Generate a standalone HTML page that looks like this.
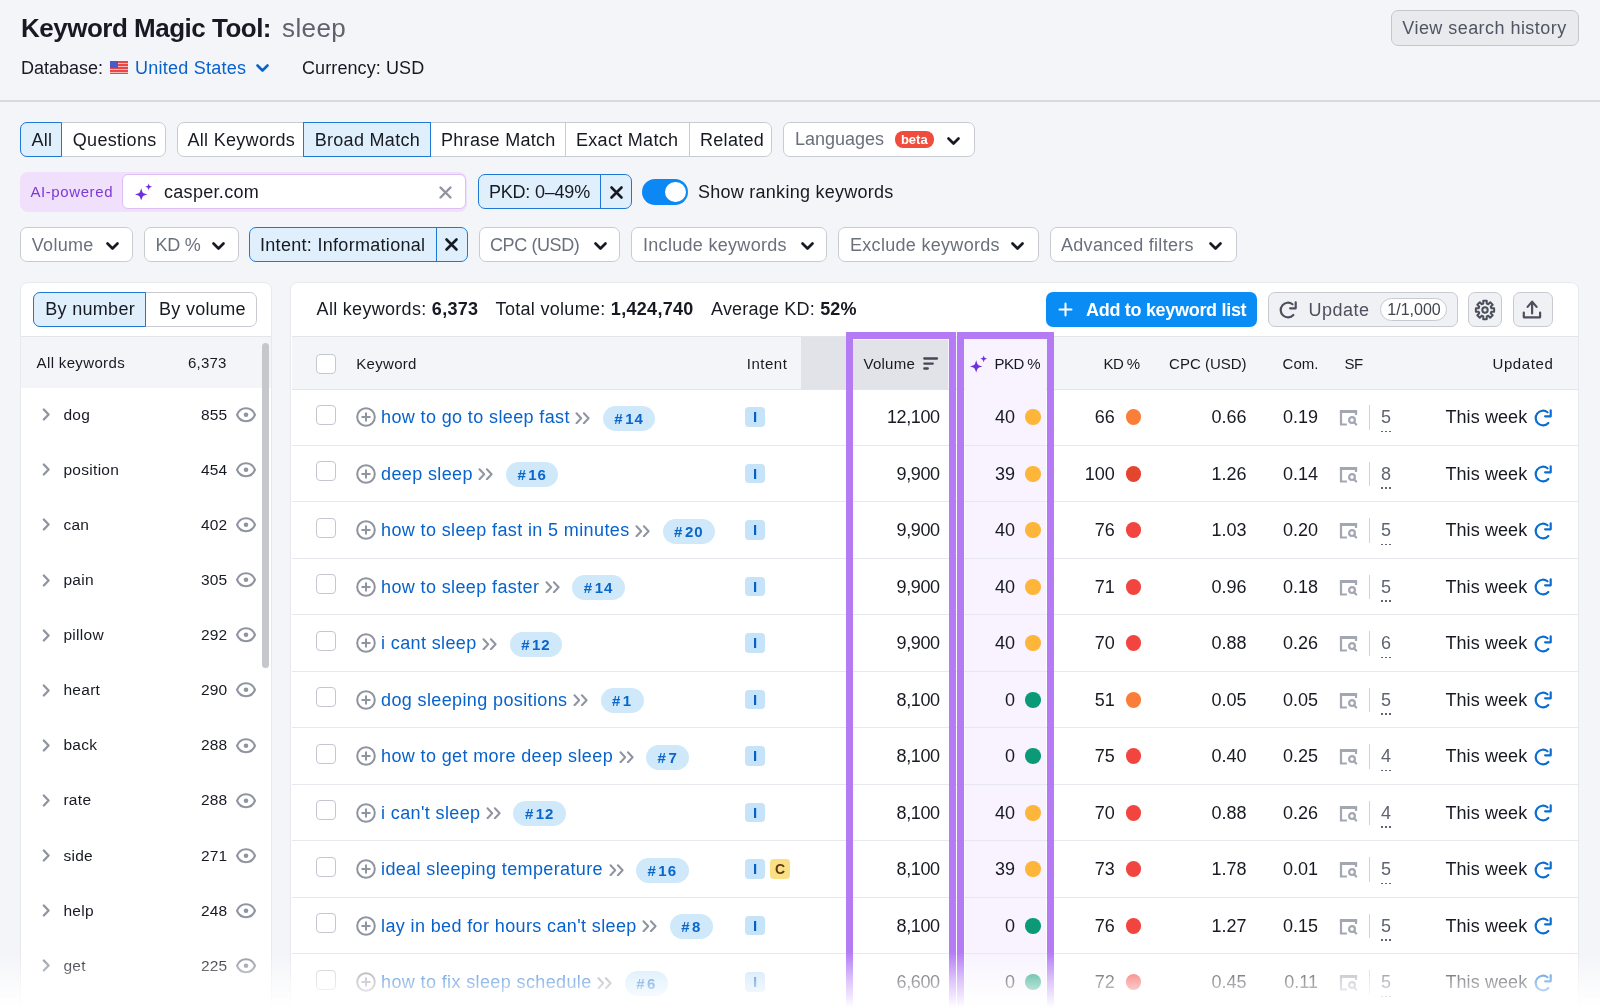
<!DOCTYPE html><html><head><meta charset="utf-8"><style>
html,body{margin:0;padding:0}
body{width:1600px;height:1008px;overflow:hidden;will-change:transform;background:#f4f5f9;font-family:"Liberation Sans",sans-serif;color:#171a22;position:relative}
.a{position:absolute;white-space:nowrap;line-height:1}
.b{position:absolute;box-sizing:border-box}
.s{position:absolute;overflow:visible}
.bl{color:#0862cc}
.gr{color:#6b707c}
</style></head><body>
<div class="a " style="left:21.00px;top:15.49px;font-size:26px;font-weight:700;letter-spacing:-0.5px">Keyword Magic Tool:</div>
<div class="a " style="left:282.00px;top:15.49px;font-size:26px;color:#5f626c;letter-spacing:0.4px">sleep</div>
<div class="a " style="left:21.00px;top:58.76px;font-size:18px;">Database:</div>
<svg class="s" style="left:110.00px;top:61.00px;" width="18" height="13" viewBox="0 0 18 13"><rect width="18" height="13" fill="#ea4848"/><rect y="2" width="18" height="1" fill="#f8b8b8"/><rect y="5" width="18" height="1" fill="#f8b8b8"/><rect y="8" width="18" height="1" fill="#f8b8b8"/><rect y="11" width="18" height="1" fill="#f8b8b8"/><rect width="8" height="7" fill="#4a5bc9"/></svg>
<div class="a bl" style="left:135.00px;top:58.76px;font-size:18px;letter-spacing:0.25px">United States</div>
<svg class="s" style="left:256.00px;top:64.00px;" width="13" height="8" viewBox="0 0 13 8"><path d="M1.5 1.5 L6.5 6.5 L11.5 1.5" fill="none" stroke="#0862cc" stroke-width="2.6" stroke-linecap="round" stroke-linejoin="round"/></svg>
<div class="a " style="left:302.00px;top:58.76px;font-size:18px;letter-spacing:0.1px">Currency: USD</div>
<div class="b" style="left:1391.00px;top:10.00px;width:188.00px;height:35.50px;background:#e9eaee;border:1px solid #c4c7cf;border-radius:7px"></div>
<div class="a " style="left:1402.30px;top:18.96px;font-size:18px;color:#4f5563;letter-spacing:0.45px">View search history</div>
<div class="b" style="left:0.00px;top:100.00px;width:1600.00px;height:2.00px;background:#d6d9e0"></div>
<div class="b" style="left:20.00px;top:122.00px;width:146.00px;height:35.00px;background:#fff;border:1px solid #c8cbd2;border-radius:7px"></div>
<div class="b" style="left:20.00px;top:122.00px;width:42.00px;height:35.00px;background:#e0effc;border:1px solid #1f78d6;border-radius:7px 0 0 7px;"></div>
<div class="a " style="left:31.50px;top:130.76px;font-size:18px;letter-spacing:0.3px">All</div>
<div class="a " style="left:72.80px;top:130.76px;font-size:18px;letter-spacing:0.3px">Questions</div>
<div class="b" style="left:176.50px;top:122.00px;width:595.50px;height:35.00px;background:#fff;border:1px solid #c8cbd2;border-radius:7px"></div>
<div class="a " style="left:187.50px;top:130.76px;font-size:18px;letter-spacing:0.3px">All Keywords</div>
<div class="b" style="left:303.00px;top:122.00px;width:128.00px;height:35.00px;background:#e0effc;border:1px solid #1f78d6;"></div>
<div class="a " style="left:314.70px;top:130.76px;font-size:18px;letter-spacing:0.3px">Broad Match</div>
<div class="a " style="left:441.00px;top:130.76px;font-size:18px;letter-spacing:0.3px">Phrase Match</div>
<div class="b" style="left:564.50px;top:122.00px;width:1.00px;height:35.00px;background:#c8cbd2"></div>
<div class="a " style="left:576.00px;top:130.76px;font-size:18px;letter-spacing:0.3px">Exact Match</div>
<div class="b" style="left:688.50px;top:122.00px;width:1.00px;height:35.00px;background:#c8cbd2"></div>
<div class="a " style="left:700.00px;top:130.76px;font-size:18px;letter-spacing:0.3px">Related</div>
<div class="b" style="left:783.00px;top:122.00px;width:191.50px;height:35.00px;background:#fff;border:1px solid #c8cbd2;border-radius:7px"></div>
<div class="a " style="left:795.00px;top:130.46px;font-size:18px;color:#6b707c">Languages</div>
<div class="b" style="left:895.00px;top:131.00px;width:38.50px;height:16.80px;background:#ef4c3e;border-radius:8px"></div>
<div class="a " style="left:914.25px;top:132.50px;font-size:13px;color:#fff;font-weight:700;transform:translateX(-50%)">beta</div>
<svg class="s" style="left:947.00px;top:137.00px;" width="13" height="8" viewBox="0 0 13 8"><path d="M1.5 1.5 L6.5 6.5 L11.5 1.5" fill="none" stroke="#171a22" stroke-width="2.7" stroke-linecap="round" stroke-linejoin="round"/></svg>
<div class="b" style="left:20.00px;top:172.00px;width:447.00px;height:39.50px;background:#f1e0fb;border-radius:8px"></div>
<div class="a " style="left:30.40px;top:184.20px;font-size:15px;color:#7b3bd6;letter-spacing:0.6px">AI-powered</div>
<div class="b" style="left:122.00px;top:174.40px;width:343.60px;height:34.80px;background:#fff;border:1px solid #dcc0f5;border-radius:6px"></div>
<svg class="s" style="left:134.60px;top:183.00px;" width="18" height="18" viewBox="0 0 18 18"><path d="M6.2 5.2 C7.564 10.036 7.564 10.036 12.4 11.4 C7.564 12.764000000000001 7.564 12.764000000000001 6.2 17.6 C4.836 12.764000000000001 4.836 12.764000000000001 0.0 11.4 C4.836 10.036 4.836 10.036 6.2 5.2Z M13.7 0.19999999999999973 C14.491999999999999 3.008 14.491999999999999 3.008 17.3 3.8 C14.491999999999999 4.592 14.491999999999999 4.592 13.7 7.4 C12.908 4.592 12.908 4.592 10.1 3.8 C12.908 3.008 12.908 3.008 13.7 0.19999999999999973Z" fill="#6d30e0"/></svg>
<div class="a " style="left:164.00px;top:182.76px;font-size:18px;letter-spacing:0.3px">casper.com</div>
<svg class="s" style="left:439.00px;top:185.70px;" width="13" height="13" viewBox="0 0 13 13"><path d="M1.5 1.5 L11.5 11.5 M11.5 1.5 L1.5 11.5" fill="none" stroke="#8f94a0" stroke-width="2.4" stroke-linecap="round"/></svg>
<div class="b" style="left:478.00px;top:174.30px;width:154.00px;height:35.10px;background:#e0effc;border:1px solid #1f78d6;border-radius:7px"></div>
<div class="b" style="left:600.00px;top:174.30px;width:1.20px;height:35.10px;background:#1f78d6"></div>
<div class="a " style="left:488.90px;top:182.76px;font-size:18px;letter-spacing:-0.2px">PKD: 0–49%</div>
<svg class="s" style="left:609.50px;top:185.50px;" width="13" height="13" viewBox="0 0 13 13"><path d="M1.5 1.5 L11.5 11.5 M11.5 1.5 L1.5 11.5" fill="none" stroke="#171a22" stroke-width="2.6" stroke-linecap="round"/></svg>
<div class="b" style="left:642.00px;top:179.00px;width:46.00px;height:25.50px;background:#0b88f4;border-radius:13px"></div>
<div class="b" style="left:664.50px;top:181.50px;width:21.00px;height:20.50px;background:#fff;border-radius:50%"></div>
<div class="a " style="left:698.00px;top:182.76px;font-size:18px;letter-spacing:0.26px">Show ranking keywords</div>
<div class="b" style="left:20.40px;top:227.00px;width:112.40px;height:35.00px;background:#fff;border:1px solid #c8cbd2;border-radius:7px"></div>
<div class="a " style="left:31.80px;top:235.76px;font-size:18px;color:#6b707c;letter-spacing:0.3px">Volume</div>
<svg class="s" style="left:106.00px;top:241.50px;" width="13" height="8" viewBox="0 0 13 8"><path d="M1.5 1.5 L6.5 6.5 L11.5 1.5" fill="none" stroke="#171a22" stroke-width="2.7" stroke-linecap="round" stroke-linejoin="round"/></svg>
<div class="b" style="left:143.60px;top:227.00px;width:95.00px;height:35.00px;background:#fff;border:1px solid #c8cbd2;border-radius:7px"></div>
<div class="a " style="left:155.60px;top:235.76px;font-size:18px;color:#6b707c;letter-spacing:-0.3px">KD %</div>
<svg class="s" style="left:211.50px;top:241.50px;" width="13" height="8" viewBox="0 0 13 8"><path d="M1.5 1.5 L6.5 6.5 L11.5 1.5" fill="none" stroke="#171a22" stroke-width="2.7" stroke-linecap="round" stroke-linejoin="round"/></svg>
<div class="b" style="left:249.00px;top:227.00px;width:219.00px;height:35.00px;background:#e0effc;border:1px solid #1f78d6;border-radius:7px"></div>
<div class="b" style="left:435.50px;top:227.00px;width:1.20px;height:35.00px;background:#1f78d6"></div>
<div class="a " style="left:260.00px;top:235.76px;font-size:18px;letter-spacing:0.3px">Intent: Informational</div>
<svg class="s" style="left:445.30px;top:238.00px;" width="13" height="13" viewBox="0 0 13 13"><path d="M1.5 1.5 L11.5 11.5 M11.5 1.5 L1.5 11.5" fill="none" stroke="#171a22" stroke-width="2.6" stroke-linecap="round"/></svg>
<div class="b" style="left:478.70px;top:227.00px;width:141.80px;height:35.00px;background:#fff;border:1px solid #c8cbd2;border-radius:7px"></div>
<div class="a " style="left:490.00px;top:235.76px;font-size:18px;color:#6b707c;letter-spacing:-0.4px">CPC (USD)</div>
<svg class="s" style="left:593.50px;top:241.50px;" width="13" height="8" viewBox="0 0 13 8"><path d="M1.5 1.5 L6.5 6.5 L11.5 1.5" fill="none" stroke="#171a22" stroke-width="2.7" stroke-linecap="round" stroke-linejoin="round"/></svg>
<div class="b" style="left:631.00px;top:227.00px;width:196.40px;height:35.00px;background:#fff;border:1px solid #c8cbd2;border-radius:7px"></div>
<div class="a " style="left:643.00px;top:235.76px;font-size:18px;color:#6b707c;letter-spacing:0.3px">Include keywords</div>
<svg class="s" style="left:800.50px;top:241.50px;" width="13" height="8" viewBox="0 0 13 8"><path d="M1.5 1.5 L6.5 6.5 L11.5 1.5" fill="none" stroke="#171a22" stroke-width="2.7" stroke-linecap="round" stroke-linejoin="round"/></svg>
<div class="b" style="left:838.00px;top:227.00px;width:200.50px;height:35.00px;background:#fff;border:1px solid #c8cbd2;border-radius:7px"></div>
<div class="a " style="left:850.00px;top:235.76px;font-size:18px;color:#6b707c;letter-spacing:0.3px">Exclude keywords</div>
<svg class="s" style="left:1011.00px;top:241.50px;" width="13" height="8" viewBox="0 0 13 8"><path d="M1.5 1.5 L6.5 6.5 L11.5 1.5" fill="none" stroke="#171a22" stroke-width="2.7" stroke-linecap="round" stroke-linejoin="round"/></svg>
<div class="b" style="left:1050.00px;top:227.00px;width:186.50px;height:35.00px;background:#fff;border:1px solid #c8cbd2;border-radius:7px"></div>
<div class="a " style="left:1061.00px;top:235.76px;font-size:18px;color:#6b707c;letter-spacing:0.3px">Advanced filters</div>
<svg class="s" style="left:1208.50px;top:241.50px;" width="13" height="8" viewBox="0 0 13 8"><path d="M1.5 1.5 L6.5 6.5 L11.5 1.5" fill="none" stroke="#171a22" stroke-width="2.7" stroke-linecap="round" stroke-linejoin="round"/></svg>
<div class="b" style="left:20.00px;top:281.60px;width:251.50px;height:748.40px;background:#fff;border:1px solid #e7e9ed;border-radius:8px"></div>
<div class="b" style="left:33.40px;top:292.20px;width:223.60px;height:35.00px;background:#fff;border:1px solid #c8cbd2;border-radius:7px"></div>
<div class="b" style="left:33.40px;top:292.20px;width:112.60px;height:35.00px;background:#e0effc;border:1px solid #1f78d6;border-radius:7px 0 0 7px"></div>
<div class="a " style="left:45.30px;top:300.06px;font-size:18px;letter-spacing:0.3px">By number</div>
<div class="a " style="left:159.00px;top:300.06px;font-size:18px;letter-spacing:0.3px">By volume</div>
<div class="b" style="left:21.00px;top:335.50px;width:249.50px;height:1.00px;background:#e3e5ea"></div>
<div class="b" style="left:21.00px;top:336.50px;width:249.50px;height:51.00px;background:#f4f5f9"></div>
<div class="a " style="left:36.60px;top:354.80px;font-size:15px;letter-spacing:0.35px">All keywords</div>
<div class="a " style="right:1373.40px;top:354.80px;font-size:15px;letter-spacing:0.2px">6,373</div>
<svg class="s" style="left:41.50px;top:408.20px;" width="9" height="13" viewBox="0 0 9 13"><path d="M1.8 1.5 L6.6 6.5 L1.8 11.5" fill="none" stroke="#8f94a0" stroke-width="2.3" stroke-linecap="round" stroke-linejoin="round"/></svg>
<div class="a " style="left:63.40px;top:406.78px;font-size:15.5px;letter-spacing:0.3px">dog</div>
<div class="a " style="right:1372.80px;top:406.78px;font-size:15.5px;letter-spacing:0.1px">855</div>
<svg class="s" style="left:236.00px;top:406.95px;" width="20" height="16" viewBox="0 0 20 16"><path d="M1 7.75 C4.5 -0.8 15.5 -0.8 19 7.75 C15.5 16.3 4.5 16.3 1 7.75Z" fill="none" stroke="#8f94a0" stroke-width="2" stroke-linejoin="round"/><circle cx="10" cy="7.75" r="2.3" fill="#8f94a0"/></svg>
<svg class="s" style="left:41.50px;top:463.30px;" width="9" height="13" viewBox="0 0 9 13"><path d="M1.8 1.5 L6.6 6.5 L1.8 11.5" fill="none" stroke="#8f94a0" stroke-width="2.3" stroke-linecap="round" stroke-linejoin="round"/></svg>
<div class="a " style="left:63.40px;top:461.88px;font-size:15.5px;letter-spacing:0.3px">position</div>
<div class="a " style="right:1372.80px;top:461.88px;font-size:15.5px;letter-spacing:0.1px">454</div>
<svg class="s" style="left:236.00px;top:462.05px;" width="20" height="16" viewBox="0 0 20 16"><path d="M1 7.75 C4.5 -0.8 15.5 -0.8 19 7.75 C15.5 16.3 4.5 16.3 1 7.75Z" fill="none" stroke="#8f94a0" stroke-width="2" stroke-linejoin="round"/><circle cx="10" cy="7.75" r="2.3" fill="#8f94a0"/></svg>
<svg class="s" style="left:41.50px;top:518.40px;" width="9" height="13" viewBox="0 0 9 13"><path d="M1.8 1.5 L6.6 6.5 L1.8 11.5" fill="none" stroke="#8f94a0" stroke-width="2.3" stroke-linecap="round" stroke-linejoin="round"/></svg>
<div class="a " style="left:63.40px;top:516.98px;font-size:15.5px;letter-spacing:0.3px">can</div>
<div class="a " style="right:1372.80px;top:516.98px;font-size:15.5px;letter-spacing:0.1px">402</div>
<svg class="s" style="left:236.00px;top:517.15px;" width="20" height="16" viewBox="0 0 20 16"><path d="M1 7.75 C4.5 -0.8 15.5 -0.8 19 7.75 C15.5 16.3 4.5 16.3 1 7.75Z" fill="none" stroke="#8f94a0" stroke-width="2" stroke-linejoin="round"/><circle cx="10" cy="7.75" r="2.3" fill="#8f94a0"/></svg>
<svg class="s" style="left:41.50px;top:573.50px;" width="9" height="13" viewBox="0 0 9 13"><path d="M1.8 1.5 L6.6 6.5 L1.8 11.5" fill="none" stroke="#8f94a0" stroke-width="2.3" stroke-linecap="round" stroke-linejoin="round"/></svg>
<div class="a " style="left:63.40px;top:572.08px;font-size:15.5px;letter-spacing:0.3px">pain</div>
<div class="a " style="right:1372.80px;top:572.08px;font-size:15.5px;letter-spacing:0.1px">305</div>
<svg class="s" style="left:236.00px;top:572.25px;" width="20" height="16" viewBox="0 0 20 16"><path d="M1 7.75 C4.5 -0.8 15.5 -0.8 19 7.75 C15.5 16.3 4.5 16.3 1 7.75Z" fill="none" stroke="#8f94a0" stroke-width="2" stroke-linejoin="round"/><circle cx="10" cy="7.75" r="2.3" fill="#8f94a0"/></svg>
<svg class="s" style="left:41.50px;top:628.60px;" width="9" height="13" viewBox="0 0 9 13"><path d="M1.8 1.5 L6.6 6.5 L1.8 11.5" fill="none" stroke="#8f94a0" stroke-width="2.3" stroke-linecap="round" stroke-linejoin="round"/></svg>
<div class="a " style="left:63.40px;top:627.18px;font-size:15.5px;letter-spacing:0.3px">pillow</div>
<div class="a " style="right:1372.80px;top:627.18px;font-size:15.5px;letter-spacing:0.1px">292</div>
<svg class="s" style="left:236.00px;top:627.35px;" width="20" height="16" viewBox="0 0 20 16"><path d="M1 7.75 C4.5 -0.8 15.5 -0.8 19 7.75 C15.5 16.3 4.5 16.3 1 7.75Z" fill="none" stroke="#8f94a0" stroke-width="2" stroke-linejoin="round"/><circle cx="10" cy="7.75" r="2.3" fill="#8f94a0"/></svg>
<svg class="s" style="left:41.50px;top:683.70px;" width="9" height="13" viewBox="0 0 9 13"><path d="M1.8 1.5 L6.6 6.5 L1.8 11.5" fill="none" stroke="#8f94a0" stroke-width="2.3" stroke-linecap="round" stroke-linejoin="round"/></svg>
<div class="a " style="left:63.40px;top:682.28px;font-size:15.5px;letter-spacing:0.3px">heart</div>
<div class="a " style="right:1372.80px;top:682.28px;font-size:15.5px;letter-spacing:0.1px">290</div>
<svg class="s" style="left:236.00px;top:682.45px;" width="20" height="16" viewBox="0 0 20 16"><path d="M1 7.75 C4.5 -0.8 15.5 -0.8 19 7.75 C15.5 16.3 4.5 16.3 1 7.75Z" fill="none" stroke="#8f94a0" stroke-width="2" stroke-linejoin="round"/><circle cx="10" cy="7.75" r="2.3" fill="#8f94a0"/></svg>
<svg class="s" style="left:41.50px;top:738.80px;" width="9" height="13" viewBox="0 0 9 13"><path d="M1.8 1.5 L6.6 6.5 L1.8 11.5" fill="none" stroke="#8f94a0" stroke-width="2.3" stroke-linecap="round" stroke-linejoin="round"/></svg>
<div class="a " style="left:63.40px;top:737.38px;font-size:15.5px;letter-spacing:0.3px">back</div>
<div class="a " style="right:1372.80px;top:737.38px;font-size:15.5px;letter-spacing:0.1px">288</div>
<svg class="s" style="left:236.00px;top:737.55px;" width="20" height="16" viewBox="0 0 20 16"><path d="M1 7.75 C4.5 -0.8 15.5 -0.8 19 7.75 C15.5 16.3 4.5 16.3 1 7.75Z" fill="none" stroke="#8f94a0" stroke-width="2" stroke-linejoin="round"/><circle cx="10" cy="7.75" r="2.3" fill="#8f94a0"/></svg>
<svg class="s" style="left:41.50px;top:793.90px;" width="9" height="13" viewBox="0 0 9 13"><path d="M1.8 1.5 L6.6 6.5 L1.8 11.5" fill="none" stroke="#8f94a0" stroke-width="2.3" stroke-linecap="round" stroke-linejoin="round"/></svg>
<div class="a " style="left:63.40px;top:792.48px;font-size:15.5px;letter-spacing:0.3px">rate</div>
<div class="a " style="right:1372.80px;top:792.48px;font-size:15.5px;letter-spacing:0.1px">288</div>
<svg class="s" style="left:236.00px;top:792.65px;" width="20" height="16" viewBox="0 0 20 16"><path d="M1 7.75 C4.5 -0.8 15.5 -0.8 19 7.75 C15.5 16.3 4.5 16.3 1 7.75Z" fill="none" stroke="#8f94a0" stroke-width="2" stroke-linejoin="round"/><circle cx="10" cy="7.75" r="2.3" fill="#8f94a0"/></svg>
<svg class="s" style="left:41.50px;top:849.00px;" width="9" height="13" viewBox="0 0 9 13"><path d="M1.8 1.5 L6.6 6.5 L1.8 11.5" fill="none" stroke="#8f94a0" stroke-width="2.3" stroke-linecap="round" stroke-linejoin="round"/></svg>
<div class="a " style="left:63.40px;top:847.58px;font-size:15.5px;letter-spacing:0.3px">side</div>
<div class="a " style="right:1372.80px;top:847.58px;font-size:15.5px;letter-spacing:0.1px">271</div>
<svg class="s" style="left:236.00px;top:847.75px;" width="20" height="16" viewBox="0 0 20 16"><path d="M1 7.75 C4.5 -0.8 15.5 -0.8 19 7.75 C15.5 16.3 4.5 16.3 1 7.75Z" fill="none" stroke="#8f94a0" stroke-width="2" stroke-linejoin="round"/><circle cx="10" cy="7.75" r="2.3" fill="#8f94a0"/></svg>
<svg class="s" style="left:41.50px;top:904.10px;" width="9" height="13" viewBox="0 0 9 13"><path d="M1.8 1.5 L6.6 6.5 L1.8 11.5" fill="none" stroke="#8f94a0" stroke-width="2.3" stroke-linecap="round" stroke-linejoin="round"/></svg>
<div class="a " style="left:63.40px;top:902.68px;font-size:15.5px;letter-spacing:0.3px">help</div>
<div class="a " style="right:1372.80px;top:902.68px;font-size:15.5px;letter-spacing:0.1px">248</div>
<svg class="s" style="left:236.00px;top:902.85px;" width="20" height="16" viewBox="0 0 20 16"><path d="M1 7.75 C4.5 -0.8 15.5 -0.8 19 7.75 C15.5 16.3 4.5 16.3 1 7.75Z" fill="none" stroke="#8f94a0" stroke-width="2" stroke-linejoin="round"/><circle cx="10" cy="7.75" r="2.3" fill="#8f94a0"/></svg>
<svg class="s" style="left:41.50px;top:959.20px;" width="9" height="13" viewBox="0 0 9 13"><path d="M1.8 1.5 L6.6 6.5 L1.8 11.5" fill="none" stroke="#8f94a0" stroke-width="2.3" stroke-linecap="round" stroke-linejoin="round"/></svg>
<div class="a " style="left:63.40px;top:957.78px;font-size:15.5px;letter-spacing:0.3px">get</div>
<div class="a " style="right:1372.80px;top:957.78px;font-size:15.5px;letter-spacing:0.1px">225</div>
<svg class="s" style="left:236.00px;top:957.95px;" width="20" height="16" viewBox="0 0 20 16"><path d="M1 7.75 C4.5 -0.8 15.5 -0.8 19 7.75 C15.5 16.3 4.5 16.3 1 7.75Z" fill="none" stroke="#8f94a0" stroke-width="2" stroke-linejoin="round"/><circle cx="10" cy="7.75" r="2.3" fill="#8f94a0"/></svg>
<div class="b" style="left:262.00px;top:342.50px;width:7.00px;height:325.50px;background:#c5c7cc;border-radius:4px"></div>
<div class="b" style="left:290.00px;top:281.50px;width:1289.00px;height:748.50px;background:#fff;border:1px solid #e7e9ed;border-radius:8px"></div>
<div class="a" style="left:316.6px;top:300.36px;font-size:18px;letter-spacing:0.3px">All keywords: <b>6,373</b></div>
<div class="a" style="left:495.6px;top:300.36px;font-size:18px;letter-spacing:0.3px">Total volume: <b>1,424,740</b></div>
<div class="a" style="left:711px;top:300.36px;font-size:18px;letter-spacing:0.2px">Average KD: <b>52%</b></div>
<div class="b" style="left:1046.00px;top:292.20px;width:211.40px;height:34.80px;background:#0a8cf5;border-radius:7px"></div>
<svg class="s" style="left:1059.00px;top:303.00px;" width="13" height="13" viewBox="0 0 13 13"><path d="M6.5 0.5 V12.5 M0.5 6.5 H12.5" stroke="#fff" stroke-width="2" stroke-linecap="round"/></svg>
<div class="a " style="left:1086.00px;top:300.76px;font-size:18px;color:#fff;font-weight:700;letter-spacing:-0.3px">Add to keyword list</div>
<div class="b" style="left:1268.00px;top:292.30px;width:189.60px;height:34.40px;background:#f0f1f4;border:1px solid #c7cad1;border-radius:7px"></div>
<svg class="s" style="left:1278.60px;top:300.60px;" width="18" height="18" viewBox="0 0 18 18"><g fill="none" stroke="#4b505c" stroke-width="2.2" stroke-linecap="round" stroke-linejoin="round"><path d="M14.34 13.98 A7.3 7.3 0 1 1 13.49 3.25"/><path d="M16.7 1.4 V7.3 H11.1"/></g></svg>
<div class="a " style="left:1308.40px;top:300.76px;font-size:18px;color:#4b505c;letter-spacing:0.5px">Update</div>
<div class="b" style="left:1379.60px;top:298.00px;width:67.80px;height:23.40px;background:#fff;border:1px solid #c7cad1;border-radius:12px"></div>
<div class="a " style="left:1414.00px;top:301.66px;font-size:16px;color:#3f4450;transform:translateX(-50%)">1/1,000</div>
<div class="b" style="left:1468.20px;top:292.30px;width:34.00px;height:34.40px;background:#f0f1f4;border:1px solid #c7cad1;border-radius:7px"></div>
<svg class="s" style="left:1475.20px;top:299.90px;" width="20" height="20" viewBox="0 0 20 20"><g fill="none" stroke="#4b505c" stroke-width="2" stroke-linejoin="round"><circle cx="10" cy="10" r="2.7"/><path d="M8.29 3.62 L8.23 0.87 L11.77 0.87 L11.71 3.62 L13.30 4.28 L15.20 2.29 L17.71 4.80 L15.72 6.70 L16.38 8.29 L19.13 8.23 L19.13 11.77 L16.38 11.71 L15.72 13.30 L17.71 15.20 L15.20 17.71 L13.30 15.72 L11.71 16.38 L11.77 19.13 L8.23 19.13 L8.29 16.38 L6.70 15.72 L4.80 17.71 L2.29 15.20 L4.28 13.30 L3.62 11.71 L0.87 11.77 L0.87 8.23 L3.62 8.29 L4.28 6.70 L2.29 4.80 L4.80 2.29 L6.70 4.28Z"/></g></svg>
<div class="b" style="left:1512.90px;top:292.30px;width:39.90px;height:34.40px;background:#f0f1f4;border:1px solid #c7cad1;border-radius:7px"></div>
<svg class="s" style="left:1522.00px;top:300.00px;" width="20" height="19" viewBox="0 0 20 19"><g fill="none" stroke="#4b505c" stroke-width="2.2" stroke-linecap="round" stroke-linejoin="round"><path d="M10.1 13.5 V1.8 M5.6 6.9 L10.1 1.6 L14.6 6.9"/><path d="M1.8 12.6 V17.3 H18.1 V12.6"/></g></svg>
<div class="b" style="left:291.50px;top:335.80px;width:1286.50px;height:1.00px;background:#e3e5ea"></div>
<div class="b" style="left:291.50px;top:336.80px;width:1286.50px;height:52.20px;background:#f4f5f9"></div>
<div class="b" style="left:291.50px;top:388.50px;width:1286.50px;height:1.00px;background:#e3e5ea"></div>
<div class="b" style="left:800.50px;top:336.80px;width:45.50px;height:52.20px;background:#e1e3e8"></div>
<div class="b" style="left:965.00px;top:389.00px;width:81.00px;height:619.00px;background:#f8f3fe"></div>
<div class="b" style="left:965.00px;top:339.50px;width:81.00px;height:49.50px;background:#f8f3fe"></div>
<div class="b" style="left:853.00px;top:339.50px;width:95.40px;height:49.50px;background:#e1e3e8"></div>
<div class="b" style="left:316.00px;top:354.40px;width:20.00px;height:20.00px;background:#fff;border:1px solid #c4c7cf;border-radius:4px"></div>
<div class="a " style="left:356.30px;top:356.30px;font-size:15px;letter-spacing:0.3px">Keyword</div>
<div class="a " style="left:746.80px;top:356.30px;font-size:15px;letter-spacing:0.5px">Intent</div>
<div class="a " style="left:863.50px;top:356.30px;font-size:15px;letter-spacing:0.25px">Volume</div>
<div class="a " style="left:994.40px;top:356.30px;font-size:15px;letter-spacing:-0.4px;word-spacing:-0.6px">PKD %</div>
<div class="a " style="right:460.40px;top:356.30px;font-size:15px;letter-spacing:-0.4px;word-spacing:-0.6px">KD %</div>
<div class="a " style="right:353.40px;top:356.30px;font-size:15px;letter-spacing:0px">CPC (USD)</div>
<div class="a " style="right:281.60px;top:356.30px;font-size:15px;letter-spacing:0px">Com.</div>
<div class="a " style="left:1344.60px;top:356.30px;font-size:15px;letter-spacing:-0.5px">SF</div>
<div class="a " style="right:46.60px;top:356.30px;font-size:15px;letter-spacing:0.6px">Updated</div>
<div class="b" style="left:291.50px;top:444.50px;width:1286.50px;height:1.00px;background:#e6e8ed"></div>
<div class="b" style="left:316.00px;top:404.75px;width:20.00px;height:19.90px;background:#fff;border:1px solid #c4c7cf;border-radius:4px"></div>
<svg class="s" style="left:356.30px;top:407.25px;" width="20" height="20" viewBox="0 0 20 20"><circle cx="10" cy="10" r="8.8" fill="none" stroke="#8f94a0" stroke-width="2"/><path d="M10 5.5V14.5M5.5 10H14.5" stroke="#8f94a0" stroke-width="2"/></svg>
<div class="a" style="left:381px;top:389.00px;font-size:18px;line-height:56.5px;letter-spacing:0.38px;color:#0862cc">how to go to sleep fast<svg width="15" height="12" viewBox="0 0 15 12" style="margin-left:5.5px;vertical-align:middle;position:relative;top:-0.6px"><path d="M1.5 1.2L6.2 6.2L1.5 11.2M8.9 1.2L13.6 6.2L8.9 11.2" fill="none" stroke="#8f94a0" stroke-width="2" stroke-linecap="round" stroke-linejoin="round"/></svg><span style="display:inline-block;vertical-align:middle;margin-left:12.5px;background:#cfe9fb;border-radius:13px;height:25px;line-height:25px;padding:0 11.5px 0 11.5px;font-size:15px;font-weight:700;letter-spacing:1px;color:#0a66c9"><span style="margin-right:1.5px">#</span>14</span></div>
<div class="b" style="left:745.20px;top:407.35px;width:19.60px;height:19.60px;background:#c5e3f9;border-radius:4px"></div>
<div class="a " style="left:755.10px;top:409.15px;font-size:15px;color:#0a5fc4;font-weight:700;transform:translateX(-50%)">I</div>
<div class="a " style="right:660.40px;top:408.31px;font-size:18px;letter-spacing:-0.4px">12,100</div>
<div class="a " style="right:585.00px;top:408.31px;font-size:18px;">40</div>
<div class="b" style="left:1025.40px;top:409.45px;width:15.60px;height:15.60px;background:#fdb53a;border-radius:50%"></div>
<div class="a " style="right:485.20px;top:408.31px;font-size:18px;">66</div>
<div class="b" style="left:1125.80px;top:409.45px;width:15.50px;height:15.60px;background:#fa7d3a;border-radius:50%"></div>
<div class="a " style="right:353.50px;top:408.31px;font-size:18px;">0.66</div>
<div class="a " style="right:282.00px;top:408.31px;font-size:18px;">0.19</div>
<svg class="s" style="left:1339.00px;top:409.25px;" width="19" height="17" viewBox="0 0 19 17"><g fill="none" stroke="#a3a7b1" stroke-width="2.2" stroke-linejoin="miter"><path d="M7.9 15.5H2V3H17V5.9"/><circle cx="13" cy="11.1" r="2.9"/><path d="M15.2 13.4L17.2 15.5" stroke-linecap="round"/></g><rect x="0.9" y="1" width="17.2" height="3" fill="#a3a7b1"/></svg>
<div class="b" style="left:1369.00px;top:405.25px;width:1.30px;height:24.50px;background:#d0d3d9"></div>
<div class="a " style="left:1381.00px;top:408.31px;font-size:18px;color:#5f6470">5</div>
<div class="b" style="left:1381.20px;top:430.95px;width:10.00px;height:1.40px;background:repeating-linear-gradient(90deg,#5f6470 0 2.2px,transparent 2.2px 3.9px)"></div>
<div class="a " style="left:1445.40px;top:408.31px;font-size:18px;letter-spacing:0.1px">This week</div>
<svg class="s" style="left:1534.00px;top:408.65px;" width="18" height="18" viewBox="0 0 18 18"><g fill="none" stroke="#0a6dd1" stroke-width="2.2" stroke-linecap="round" stroke-linejoin="round"><path d="M14.34 13.98 A7.3 7.3 0 1 1 13.49 3.25"/><path d="M16.7 1.4 V7.3 H11.1"/></g></svg>
<div class="b" style="left:291.50px;top:501.00px;width:1286.50px;height:1.00px;background:#e6e8ed"></div>
<div class="b" style="left:316.00px;top:461.25px;width:20.00px;height:19.90px;background:#fff;border:1px solid #c4c7cf;border-radius:4px"></div>
<svg class="s" style="left:356.30px;top:463.75px;" width="20" height="20" viewBox="0 0 20 20"><circle cx="10" cy="10" r="8.8" fill="none" stroke="#8f94a0" stroke-width="2"/><path d="M10 5.5V14.5M5.5 10H14.5" stroke="#8f94a0" stroke-width="2"/></svg>
<div class="a" style="left:381px;top:445.50px;font-size:18px;line-height:56.5px;letter-spacing:0.38px;color:#0862cc">deep sleep<svg width="15" height="12" viewBox="0 0 15 12" style="margin-left:5.5px;vertical-align:middle;position:relative;top:-0.6px"><path d="M1.5 1.2L6.2 6.2L1.5 11.2M8.9 1.2L13.6 6.2L8.9 11.2" fill="none" stroke="#8f94a0" stroke-width="2" stroke-linecap="round" stroke-linejoin="round"/></svg><span style="display:inline-block;vertical-align:middle;margin-left:12.5px;background:#cfe9fb;border-radius:13px;height:25px;line-height:25px;padding:0 11.5px 0 11.5px;font-size:15px;font-weight:700;letter-spacing:1px;color:#0a66c9"><span style="margin-right:1.5px">#</span>16</span></div>
<div class="b" style="left:745.20px;top:463.85px;width:19.60px;height:19.60px;background:#c5e3f9;border-radius:4px"></div>
<div class="a " style="left:755.10px;top:465.65px;font-size:15px;color:#0a5fc4;font-weight:700;transform:translateX(-50%)">I</div>
<div class="a " style="right:660.40px;top:464.81px;font-size:18px;letter-spacing:-0.4px">9,900</div>
<div class="a " style="right:585.00px;top:464.81px;font-size:18px;">39</div>
<div class="b" style="left:1025.40px;top:465.95px;width:15.60px;height:15.60px;background:#fdb53a;border-radius:50%"></div>
<div class="a " style="right:485.20px;top:464.81px;font-size:18px;">100</div>
<div class="b" style="left:1125.80px;top:465.95px;width:15.50px;height:15.60px;background:#e3452f;border-radius:50%"></div>
<div class="a " style="right:353.50px;top:464.81px;font-size:18px;">1.26</div>
<div class="a " style="right:282.00px;top:464.81px;font-size:18px;">0.14</div>
<svg class="s" style="left:1339.00px;top:465.75px;" width="19" height="17" viewBox="0 0 19 17"><g fill="none" stroke="#a3a7b1" stroke-width="2.2" stroke-linejoin="miter"><path d="M7.9 15.5H2V3H17V5.9"/><circle cx="13" cy="11.1" r="2.9"/><path d="M15.2 13.4L17.2 15.5" stroke-linecap="round"/></g><rect x="0.9" y="1" width="17.2" height="3" fill="#a3a7b1"/></svg>
<div class="b" style="left:1369.00px;top:461.75px;width:1.30px;height:24.50px;background:#d0d3d9"></div>
<div class="a " style="left:1381.00px;top:464.81px;font-size:18px;color:#5f6470">8</div>
<div class="b" style="left:1381.20px;top:487.45px;width:10.00px;height:1.40px;background:repeating-linear-gradient(90deg,#5f6470 0 2.2px,transparent 2.2px 3.9px)"></div>
<div class="a " style="left:1445.40px;top:464.81px;font-size:18px;letter-spacing:0.1px">This week</div>
<svg class="s" style="left:1534.00px;top:465.15px;" width="18" height="18" viewBox="0 0 18 18"><g fill="none" stroke="#0a6dd1" stroke-width="2.2" stroke-linecap="round" stroke-linejoin="round"><path d="M14.34 13.98 A7.3 7.3 0 1 1 13.49 3.25"/><path d="M16.7 1.4 V7.3 H11.1"/></g></svg>
<div class="b" style="left:291.50px;top:557.50px;width:1286.50px;height:1.00px;background:#e6e8ed"></div>
<div class="b" style="left:316.00px;top:517.75px;width:20.00px;height:19.90px;background:#fff;border:1px solid #c4c7cf;border-radius:4px"></div>
<svg class="s" style="left:356.30px;top:520.25px;" width="20" height="20" viewBox="0 0 20 20"><circle cx="10" cy="10" r="8.8" fill="none" stroke="#8f94a0" stroke-width="2"/><path d="M10 5.5V14.5M5.5 10H14.5" stroke="#8f94a0" stroke-width="2"/></svg>
<div class="a" style="left:381px;top:502.00px;font-size:18px;line-height:56.5px;letter-spacing:0.38px;color:#0862cc">how to sleep fast in 5 minutes<svg width="15" height="12" viewBox="0 0 15 12" style="margin-left:5.5px;vertical-align:middle;position:relative;top:-0.6px"><path d="M1.5 1.2L6.2 6.2L1.5 11.2M8.9 1.2L13.6 6.2L8.9 11.2" fill="none" stroke="#8f94a0" stroke-width="2" stroke-linecap="round" stroke-linejoin="round"/></svg><span style="display:inline-block;vertical-align:middle;margin-left:12.5px;background:#cfe9fb;border-radius:13px;height:25px;line-height:25px;padding:0 11.5px 0 11.5px;font-size:15px;font-weight:700;letter-spacing:1px;color:#0a66c9"><span style="margin-right:1.5px">#</span>20</span></div>
<div class="b" style="left:745.20px;top:520.35px;width:19.60px;height:19.60px;background:#c5e3f9;border-radius:4px"></div>
<div class="a " style="left:755.10px;top:522.15px;font-size:15px;color:#0a5fc4;font-weight:700;transform:translateX(-50%)">I</div>
<div class="a " style="right:660.40px;top:521.31px;font-size:18px;letter-spacing:-0.4px">9,900</div>
<div class="a " style="right:585.00px;top:521.31px;font-size:18px;">40</div>
<div class="b" style="left:1025.40px;top:522.45px;width:15.60px;height:15.60px;background:#fdb53a;border-radius:50%"></div>
<div class="a " style="right:485.20px;top:521.31px;font-size:18px;">76</div>
<div class="b" style="left:1125.80px;top:522.45px;width:15.50px;height:15.60px;background:#f2453f;border-radius:50%"></div>
<div class="a " style="right:353.50px;top:521.31px;font-size:18px;">1.03</div>
<div class="a " style="right:282.00px;top:521.31px;font-size:18px;">0.20</div>
<svg class="s" style="left:1339.00px;top:522.25px;" width="19" height="17" viewBox="0 0 19 17"><g fill="none" stroke="#a3a7b1" stroke-width="2.2" stroke-linejoin="miter"><path d="M7.9 15.5H2V3H17V5.9"/><circle cx="13" cy="11.1" r="2.9"/><path d="M15.2 13.4L17.2 15.5" stroke-linecap="round"/></g><rect x="0.9" y="1" width="17.2" height="3" fill="#a3a7b1"/></svg>
<div class="b" style="left:1369.00px;top:518.25px;width:1.30px;height:24.50px;background:#d0d3d9"></div>
<div class="a " style="left:1381.00px;top:521.31px;font-size:18px;color:#5f6470">5</div>
<div class="b" style="left:1381.20px;top:543.95px;width:10.00px;height:1.40px;background:repeating-linear-gradient(90deg,#5f6470 0 2.2px,transparent 2.2px 3.9px)"></div>
<div class="a " style="left:1445.40px;top:521.31px;font-size:18px;letter-spacing:0.1px">This week</div>
<svg class="s" style="left:1534.00px;top:521.65px;" width="18" height="18" viewBox="0 0 18 18"><g fill="none" stroke="#0a6dd1" stroke-width="2.2" stroke-linecap="round" stroke-linejoin="round"><path d="M14.34 13.98 A7.3 7.3 0 1 1 13.49 3.25"/><path d="M16.7 1.4 V7.3 H11.1"/></g></svg>
<div class="b" style="left:291.50px;top:614.00px;width:1286.50px;height:1.00px;background:#e6e8ed"></div>
<div class="b" style="left:316.00px;top:574.25px;width:20.00px;height:19.90px;background:#fff;border:1px solid #c4c7cf;border-radius:4px"></div>
<svg class="s" style="left:356.30px;top:576.75px;" width="20" height="20" viewBox="0 0 20 20"><circle cx="10" cy="10" r="8.8" fill="none" stroke="#8f94a0" stroke-width="2"/><path d="M10 5.5V14.5M5.5 10H14.5" stroke="#8f94a0" stroke-width="2"/></svg>
<div class="a" style="left:381px;top:558.50px;font-size:18px;line-height:56.5px;letter-spacing:0.38px;color:#0862cc">how to sleep faster<svg width="15" height="12" viewBox="0 0 15 12" style="margin-left:5.5px;vertical-align:middle;position:relative;top:-0.6px"><path d="M1.5 1.2L6.2 6.2L1.5 11.2M8.9 1.2L13.6 6.2L8.9 11.2" fill="none" stroke="#8f94a0" stroke-width="2" stroke-linecap="round" stroke-linejoin="round"/></svg><span style="display:inline-block;vertical-align:middle;margin-left:12.5px;background:#cfe9fb;border-radius:13px;height:25px;line-height:25px;padding:0 11.5px 0 11.5px;font-size:15px;font-weight:700;letter-spacing:1px;color:#0a66c9"><span style="margin-right:1.5px">#</span>14</span></div>
<div class="b" style="left:745.20px;top:576.85px;width:19.60px;height:19.60px;background:#c5e3f9;border-radius:4px"></div>
<div class="a " style="left:755.10px;top:578.65px;font-size:15px;color:#0a5fc4;font-weight:700;transform:translateX(-50%)">I</div>
<div class="a " style="right:660.40px;top:577.81px;font-size:18px;letter-spacing:-0.4px">9,900</div>
<div class="a " style="right:585.00px;top:577.81px;font-size:18px;">40</div>
<div class="b" style="left:1025.40px;top:578.95px;width:15.60px;height:15.60px;background:#fdb53a;border-radius:50%"></div>
<div class="a " style="right:485.20px;top:577.81px;font-size:18px;">71</div>
<div class="b" style="left:1125.80px;top:578.95px;width:15.50px;height:15.60px;background:#f2453f;border-radius:50%"></div>
<div class="a " style="right:353.50px;top:577.81px;font-size:18px;">0.96</div>
<div class="a " style="right:282.00px;top:577.81px;font-size:18px;">0.18</div>
<svg class="s" style="left:1339.00px;top:578.75px;" width="19" height="17" viewBox="0 0 19 17"><g fill="none" stroke="#a3a7b1" stroke-width="2.2" stroke-linejoin="miter"><path d="M7.9 15.5H2V3H17V5.9"/><circle cx="13" cy="11.1" r="2.9"/><path d="M15.2 13.4L17.2 15.5" stroke-linecap="round"/></g><rect x="0.9" y="1" width="17.2" height="3" fill="#a3a7b1"/></svg>
<div class="b" style="left:1369.00px;top:574.75px;width:1.30px;height:24.50px;background:#d0d3d9"></div>
<div class="a " style="left:1381.00px;top:577.81px;font-size:18px;color:#5f6470">5</div>
<div class="b" style="left:1381.20px;top:600.45px;width:10.00px;height:1.40px;background:repeating-linear-gradient(90deg,#5f6470 0 2.2px,transparent 2.2px 3.9px)"></div>
<div class="a " style="left:1445.40px;top:577.81px;font-size:18px;letter-spacing:0.1px">This week</div>
<svg class="s" style="left:1534.00px;top:578.15px;" width="18" height="18" viewBox="0 0 18 18"><g fill="none" stroke="#0a6dd1" stroke-width="2.2" stroke-linecap="round" stroke-linejoin="round"><path d="M14.34 13.98 A7.3 7.3 0 1 1 13.49 3.25"/><path d="M16.7 1.4 V7.3 H11.1"/></g></svg>
<div class="b" style="left:291.50px;top:670.50px;width:1286.50px;height:1.00px;background:#e6e8ed"></div>
<div class="b" style="left:316.00px;top:630.75px;width:20.00px;height:19.90px;background:#fff;border:1px solid #c4c7cf;border-radius:4px"></div>
<svg class="s" style="left:356.30px;top:633.25px;" width="20" height="20" viewBox="0 0 20 20"><circle cx="10" cy="10" r="8.8" fill="none" stroke="#8f94a0" stroke-width="2"/><path d="M10 5.5V14.5M5.5 10H14.5" stroke="#8f94a0" stroke-width="2"/></svg>
<div class="a" style="left:381px;top:615.00px;font-size:18px;line-height:56.5px;letter-spacing:0.38px;color:#0862cc">i cant sleep<svg width="15" height="12" viewBox="0 0 15 12" style="margin-left:5.5px;vertical-align:middle;position:relative;top:-0.6px"><path d="M1.5 1.2L6.2 6.2L1.5 11.2M8.9 1.2L13.6 6.2L8.9 11.2" fill="none" stroke="#8f94a0" stroke-width="2" stroke-linecap="round" stroke-linejoin="round"/></svg><span style="display:inline-block;vertical-align:middle;margin-left:12.5px;background:#cfe9fb;border-radius:13px;height:25px;line-height:25px;padding:0 11.5px 0 11.5px;font-size:15px;font-weight:700;letter-spacing:1px;color:#0a66c9"><span style="margin-right:1.5px">#</span>12</span></div>
<div class="b" style="left:745.20px;top:633.35px;width:19.60px;height:19.60px;background:#c5e3f9;border-radius:4px"></div>
<div class="a " style="left:755.10px;top:635.15px;font-size:15px;color:#0a5fc4;font-weight:700;transform:translateX(-50%)">I</div>
<div class="a " style="right:660.40px;top:634.31px;font-size:18px;letter-spacing:-0.4px">9,900</div>
<div class="a " style="right:585.00px;top:634.31px;font-size:18px;">40</div>
<div class="b" style="left:1025.40px;top:635.45px;width:15.60px;height:15.60px;background:#fdb53a;border-radius:50%"></div>
<div class="a " style="right:485.20px;top:634.31px;font-size:18px;">70</div>
<div class="b" style="left:1125.80px;top:635.45px;width:15.50px;height:15.60px;background:#f2453f;border-radius:50%"></div>
<div class="a " style="right:353.50px;top:634.31px;font-size:18px;">0.88</div>
<div class="a " style="right:282.00px;top:634.31px;font-size:18px;">0.26</div>
<svg class="s" style="left:1339.00px;top:635.25px;" width="19" height="17" viewBox="0 0 19 17"><g fill="none" stroke="#a3a7b1" stroke-width="2.2" stroke-linejoin="miter"><path d="M7.9 15.5H2V3H17V5.9"/><circle cx="13" cy="11.1" r="2.9"/><path d="M15.2 13.4L17.2 15.5" stroke-linecap="round"/></g><rect x="0.9" y="1" width="17.2" height="3" fill="#a3a7b1"/></svg>
<div class="b" style="left:1369.00px;top:631.25px;width:1.30px;height:24.50px;background:#d0d3d9"></div>
<div class="a " style="left:1381.00px;top:634.31px;font-size:18px;color:#5f6470">6</div>
<div class="b" style="left:1381.20px;top:656.95px;width:10.00px;height:1.40px;background:repeating-linear-gradient(90deg,#5f6470 0 2.2px,transparent 2.2px 3.9px)"></div>
<div class="a " style="left:1445.40px;top:634.31px;font-size:18px;letter-spacing:0.1px">This week</div>
<svg class="s" style="left:1534.00px;top:634.65px;" width="18" height="18" viewBox="0 0 18 18"><g fill="none" stroke="#0a6dd1" stroke-width="2.2" stroke-linecap="round" stroke-linejoin="round"><path d="M14.34 13.98 A7.3 7.3 0 1 1 13.49 3.25"/><path d="M16.7 1.4 V7.3 H11.1"/></g></svg>
<div class="b" style="left:291.50px;top:727.00px;width:1286.50px;height:1.00px;background:#e6e8ed"></div>
<div class="b" style="left:316.00px;top:687.25px;width:20.00px;height:19.90px;background:#fff;border:1px solid #c4c7cf;border-radius:4px"></div>
<svg class="s" style="left:356.30px;top:689.75px;" width="20" height="20" viewBox="0 0 20 20"><circle cx="10" cy="10" r="8.8" fill="none" stroke="#8f94a0" stroke-width="2"/><path d="M10 5.5V14.5M5.5 10H14.5" stroke="#8f94a0" stroke-width="2"/></svg>
<div class="a" style="left:381px;top:671.50px;font-size:18px;line-height:56.5px;letter-spacing:0.38px;color:#0862cc">dog sleeping positions<svg width="15" height="12" viewBox="0 0 15 12" style="margin-left:5.5px;vertical-align:middle;position:relative;top:-0.6px"><path d="M1.5 1.2L6.2 6.2L1.5 11.2M8.9 1.2L13.6 6.2L8.9 11.2" fill="none" stroke="#8f94a0" stroke-width="2" stroke-linecap="round" stroke-linejoin="round"/></svg><span style="display:inline-block;vertical-align:middle;margin-left:12.5px;background:#cfe9fb;border-radius:13px;height:25px;line-height:25px;padding:0 11.5px 0 11.5px;font-size:15px;font-weight:700;letter-spacing:1px;color:#0a66c9"><span style="margin-right:1.5px">#</span>1</span></div>
<div class="b" style="left:745.20px;top:689.85px;width:19.60px;height:19.60px;background:#c5e3f9;border-radius:4px"></div>
<div class="a " style="left:755.10px;top:691.65px;font-size:15px;color:#0a5fc4;font-weight:700;transform:translateX(-50%)">I</div>
<div class="a " style="right:660.40px;top:690.81px;font-size:18px;letter-spacing:-0.4px">8,100</div>
<div class="a " style="right:585.00px;top:690.81px;font-size:18px;">0</div>
<div class="b" style="left:1025.40px;top:691.95px;width:15.60px;height:15.60px;background:#0b9a77;border-radius:50%"></div>
<div class="a " style="right:485.20px;top:690.81px;font-size:18px;">51</div>
<div class="b" style="left:1125.80px;top:691.95px;width:15.50px;height:15.60px;background:#fa7d3a;border-radius:50%"></div>
<div class="a " style="right:353.50px;top:690.81px;font-size:18px;">0.05</div>
<div class="a " style="right:282.00px;top:690.81px;font-size:18px;">0.05</div>
<svg class="s" style="left:1339.00px;top:691.75px;" width="19" height="17" viewBox="0 0 19 17"><g fill="none" stroke="#a3a7b1" stroke-width="2.2" stroke-linejoin="miter"><path d="M7.9 15.5H2V3H17V5.9"/><circle cx="13" cy="11.1" r="2.9"/><path d="M15.2 13.4L17.2 15.5" stroke-linecap="round"/></g><rect x="0.9" y="1" width="17.2" height="3" fill="#a3a7b1"/></svg>
<div class="b" style="left:1369.00px;top:687.75px;width:1.30px;height:24.50px;background:#d0d3d9"></div>
<div class="a " style="left:1381.00px;top:690.81px;font-size:18px;color:#5f6470">5</div>
<div class="b" style="left:1381.20px;top:713.45px;width:10.00px;height:1.40px;background:repeating-linear-gradient(90deg,#5f6470 0 2.2px,transparent 2.2px 3.9px)"></div>
<div class="a " style="left:1445.40px;top:690.81px;font-size:18px;letter-spacing:0.1px">This week</div>
<svg class="s" style="left:1534.00px;top:691.15px;" width="18" height="18" viewBox="0 0 18 18"><g fill="none" stroke="#0a6dd1" stroke-width="2.2" stroke-linecap="round" stroke-linejoin="round"><path d="M14.34 13.98 A7.3 7.3 0 1 1 13.49 3.25"/><path d="M16.7 1.4 V7.3 H11.1"/></g></svg>
<div class="b" style="left:291.50px;top:783.50px;width:1286.50px;height:1.00px;background:#e6e8ed"></div>
<div class="b" style="left:316.00px;top:743.75px;width:20.00px;height:19.90px;background:#fff;border:1px solid #c4c7cf;border-radius:4px"></div>
<svg class="s" style="left:356.30px;top:746.25px;" width="20" height="20" viewBox="0 0 20 20"><circle cx="10" cy="10" r="8.8" fill="none" stroke="#8f94a0" stroke-width="2"/><path d="M10 5.5V14.5M5.5 10H14.5" stroke="#8f94a0" stroke-width="2"/></svg>
<div class="a" style="left:381px;top:728.00px;font-size:18px;line-height:56.5px;letter-spacing:0.38px;color:#0862cc">how to get more deep sleep<svg width="15" height="12" viewBox="0 0 15 12" style="margin-left:5.5px;vertical-align:middle;position:relative;top:-0.6px"><path d="M1.5 1.2L6.2 6.2L1.5 11.2M8.9 1.2L13.6 6.2L8.9 11.2" fill="none" stroke="#8f94a0" stroke-width="2" stroke-linecap="round" stroke-linejoin="round"/></svg><span style="display:inline-block;vertical-align:middle;margin-left:12.5px;background:#cfe9fb;border-radius:13px;height:25px;line-height:25px;padding:0 11.5px 0 11.5px;font-size:15px;font-weight:700;letter-spacing:1px;color:#0a66c9"><span style="margin-right:1.5px">#</span>7</span></div>
<div class="b" style="left:745.20px;top:746.35px;width:19.60px;height:19.60px;background:#c5e3f9;border-radius:4px"></div>
<div class="a " style="left:755.10px;top:748.15px;font-size:15px;color:#0a5fc4;font-weight:700;transform:translateX(-50%)">I</div>
<div class="a " style="right:660.40px;top:747.31px;font-size:18px;letter-spacing:-0.4px">8,100</div>
<div class="a " style="right:585.00px;top:747.31px;font-size:18px;">0</div>
<div class="b" style="left:1025.40px;top:748.45px;width:15.60px;height:15.60px;background:#0b9a77;border-radius:50%"></div>
<div class="a " style="right:485.20px;top:747.31px;font-size:18px;">75</div>
<div class="b" style="left:1125.80px;top:748.45px;width:15.50px;height:15.60px;background:#f2453f;border-radius:50%"></div>
<div class="a " style="right:353.50px;top:747.31px;font-size:18px;">0.40</div>
<div class="a " style="right:282.00px;top:747.31px;font-size:18px;">0.25</div>
<svg class="s" style="left:1339.00px;top:748.25px;" width="19" height="17" viewBox="0 0 19 17"><g fill="none" stroke="#a3a7b1" stroke-width="2.2" stroke-linejoin="miter"><path d="M7.9 15.5H2V3H17V5.9"/><circle cx="13" cy="11.1" r="2.9"/><path d="M15.2 13.4L17.2 15.5" stroke-linecap="round"/></g><rect x="0.9" y="1" width="17.2" height="3" fill="#a3a7b1"/></svg>
<div class="b" style="left:1369.00px;top:744.25px;width:1.30px;height:24.50px;background:#d0d3d9"></div>
<div class="a " style="left:1381.00px;top:747.31px;font-size:18px;color:#5f6470">4</div>
<div class="b" style="left:1381.20px;top:769.95px;width:10.00px;height:1.40px;background:repeating-linear-gradient(90deg,#5f6470 0 2.2px,transparent 2.2px 3.9px)"></div>
<div class="a " style="left:1445.40px;top:747.31px;font-size:18px;letter-spacing:0.1px">This week</div>
<svg class="s" style="left:1534.00px;top:747.65px;" width="18" height="18" viewBox="0 0 18 18"><g fill="none" stroke="#0a6dd1" stroke-width="2.2" stroke-linecap="round" stroke-linejoin="round"><path d="M14.34 13.98 A7.3 7.3 0 1 1 13.49 3.25"/><path d="M16.7 1.4 V7.3 H11.1"/></g></svg>
<div class="b" style="left:291.50px;top:840.00px;width:1286.50px;height:1.00px;background:#e6e8ed"></div>
<div class="b" style="left:316.00px;top:800.25px;width:20.00px;height:19.90px;background:#fff;border:1px solid #c4c7cf;border-radius:4px"></div>
<svg class="s" style="left:356.30px;top:802.75px;" width="20" height="20" viewBox="0 0 20 20"><circle cx="10" cy="10" r="8.8" fill="none" stroke="#8f94a0" stroke-width="2"/><path d="M10 5.5V14.5M5.5 10H14.5" stroke="#8f94a0" stroke-width="2"/></svg>
<div class="a" style="left:381px;top:784.50px;font-size:18px;line-height:56.5px;letter-spacing:0.38px;color:#0862cc">i can't sleep<svg width="15" height="12" viewBox="0 0 15 12" style="margin-left:5.5px;vertical-align:middle;position:relative;top:-0.6px"><path d="M1.5 1.2L6.2 6.2L1.5 11.2M8.9 1.2L13.6 6.2L8.9 11.2" fill="none" stroke="#8f94a0" stroke-width="2" stroke-linecap="round" stroke-linejoin="round"/></svg><span style="display:inline-block;vertical-align:middle;margin-left:12.5px;background:#cfe9fb;border-radius:13px;height:25px;line-height:25px;padding:0 11.5px 0 11.5px;font-size:15px;font-weight:700;letter-spacing:1px;color:#0a66c9"><span style="margin-right:1.5px">#</span>12</span></div>
<div class="b" style="left:745.20px;top:802.85px;width:19.60px;height:19.60px;background:#c5e3f9;border-radius:4px"></div>
<div class="a " style="left:755.10px;top:804.65px;font-size:15px;color:#0a5fc4;font-weight:700;transform:translateX(-50%)">I</div>
<div class="a " style="right:660.40px;top:803.81px;font-size:18px;letter-spacing:-0.4px">8,100</div>
<div class="a " style="right:585.00px;top:803.81px;font-size:18px;">40</div>
<div class="b" style="left:1025.40px;top:804.95px;width:15.60px;height:15.60px;background:#fdb53a;border-radius:50%"></div>
<div class="a " style="right:485.20px;top:803.81px;font-size:18px;">70</div>
<div class="b" style="left:1125.80px;top:804.95px;width:15.50px;height:15.60px;background:#f2453f;border-radius:50%"></div>
<div class="a " style="right:353.50px;top:803.81px;font-size:18px;">0.88</div>
<div class="a " style="right:282.00px;top:803.81px;font-size:18px;">0.26</div>
<svg class="s" style="left:1339.00px;top:804.75px;" width="19" height="17" viewBox="0 0 19 17"><g fill="none" stroke="#a3a7b1" stroke-width="2.2" stroke-linejoin="miter"><path d="M7.9 15.5H2V3H17V5.9"/><circle cx="13" cy="11.1" r="2.9"/><path d="M15.2 13.4L17.2 15.5" stroke-linecap="round"/></g><rect x="0.9" y="1" width="17.2" height="3" fill="#a3a7b1"/></svg>
<div class="b" style="left:1369.00px;top:800.75px;width:1.30px;height:24.50px;background:#d0d3d9"></div>
<div class="a " style="left:1381.00px;top:803.81px;font-size:18px;color:#5f6470">4</div>
<div class="b" style="left:1381.20px;top:826.45px;width:10.00px;height:1.40px;background:repeating-linear-gradient(90deg,#5f6470 0 2.2px,transparent 2.2px 3.9px)"></div>
<div class="a " style="left:1445.40px;top:803.81px;font-size:18px;letter-spacing:0.1px">This week</div>
<svg class="s" style="left:1534.00px;top:804.15px;" width="18" height="18" viewBox="0 0 18 18"><g fill="none" stroke="#0a6dd1" stroke-width="2.2" stroke-linecap="round" stroke-linejoin="round"><path d="M14.34 13.98 A7.3 7.3 0 1 1 13.49 3.25"/><path d="M16.7 1.4 V7.3 H11.1"/></g></svg>
<div class="b" style="left:291.50px;top:896.50px;width:1286.50px;height:1.00px;background:#e6e8ed"></div>
<div class="b" style="left:316.00px;top:856.75px;width:20.00px;height:19.90px;background:#fff;border:1px solid #c4c7cf;border-radius:4px"></div>
<svg class="s" style="left:356.30px;top:859.25px;" width="20" height="20" viewBox="0 0 20 20"><circle cx="10" cy="10" r="8.8" fill="none" stroke="#8f94a0" stroke-width="2"/><path d="M10 5.5V14.5M5.5 10H14.5" stroke="#8f94a0" stroke-width="2"/></svg>
<div class="a" style="left:381px;top:841.00px;font-size:18px;line-height:56.5px;letter-spacing:0.38px;color:#0862cc">ideal sleeping temperature<svg width="15" height="12" viewBox="0 0 15 12" style="margin-left:5.5px;vertical-align:middle;position:relative;top:-0.6px"><path d="M1.5 1.2L6.2 6.2L1.5 11.2M8.9 1.2L13.6 6.2L8.9 11.2" fill="none" stroke="#8f94a0" stroke-width="2" stroke-linecap="round" stroke-linejoin="round"/></svg><span style="display:inline-block;vertical-align:middle;margin-left:12.5px;background:#cfe9fb;border-radius:13px;height:25px;line-height:25px;padding:0 11.5px 0 11.5px;font-size:15px;font-weight:700;letter-spacing:1px;color:#0a66c9"><span style="margin-right:1.5px">#</span>16</span></div>
<div class="b" style="left:745.20px;top:859.35px;width:19.60px;height:19.60px;background:#c5e3f9;border-radius:4px"></div>
<div class="a " style="left:755.10px;top:861.15px;font-size:15px;color:#0a5fc4;font-weight:700;transform:translateX(-50%)">I</div>
<div class="b" style="left:770.20px;top:859.35px;width:19.70px;height:19.60px;background:#fbdf84;border-radius:4px"></div>
<div class="a " style="left:780.10px;top:862.20px;font-size:14px;color:#5b3a12;font-weight:700;transform:translateX(-50%)">C</div>
<div class="a " style="right:660.40px;top:860.31px;font-size:18px;letter-spacing:-0.4px">8,100</div>
<div class="a " style="right:585.00px;top:860.31px;font-size:18px;">39</div>
<div class="b" style="left:1025.40px;top:861.45px;width:15.60px;height:15.60px;background:#fdb53a;border-radius:50%"></div>
<div class="a " style="right:485.20px;top:860.31px;font-size:18px;">73</div>
<div class="b" style="left:1125.80px;top:861.45px;width:15.50px;height:15.60px;background:#f2453f;border-radius:50%"></div>
<div class="a " style="right:353.50px;top:860.31px;font-size:18px;">1.78</div>
<div class="a " style="right:282.00px;top:860.31px;font-size:18px;">0.01</div>
<svg class="s" style="left:1339.00px;top:861.25px;" width="19" height="17" viewBox="0 0 19 17"><g fill="none" stroke="#a3a7b1" stroke-width="2.2" stroke-linejoin="miter"><path d="M7.9 15.5H2V3H17V5.9"/><circle cx="13" cy="11.1" r="2.9"/><path d="M15.2 13.4L17.2 15.5" stroke-linecap="round"/></g><rect x="0.9" y="1" width="17.2" height="3" fill="#a3a7b1"/></svg>
<div class="b" style="left:1369.00px;top:857.25px;width:1.30px;height:24.50px;background:#d0d3d9"></div>
<div class="a " style="left:1381.00px;top:860.31px;font-size:18px;color:#5f6470">5</div>
<div class="b" style="left:1381.20px;top:882.95px;width:10.00px;height:1.40px;background:repeating-linear-gradient(90deg,#5f6470 0 2.2px,transparent 2.2px 3.9px)"></div>
<div class="a " style="left:1445.40px;top:860.31px;font-size:18px;letter-spacing:0.1px">This week</div>
<svg class="s" style="left:1534.00px;top:860.65px;" width="18" height="18" viewBox="0 0 18 18"><g fill="none" stroke="#0a6dd1" stroke-width="2.2" stroke-linecap="round" stroke-linejoin="round"><path d="M14.34 13.98 A7.3 7.3 0 1 1 13.49 3.25"/><path d="M16.7 1.4 V7.3 H11.1"/></g></svg>
<div class="b" style="left:291.50px;top:953.00px;width:1286.50px;height:1.00px;background:#e6e8ed"></div>
<div class="b" style="left:316.00px;top:913.25px;width:20.00px;height:19.90px;background:#fff;border:1px solid #c4c7cf;border-radius:4px"></div>
<svg class="s" style="left:356.30px;top:915.75px;" width="20" height="20" viewBox="0 0 20 20"><circle cx="10" cy="10" r="8.8" fill="none" stroke="#8f94a0" stroke-width="2"/><path d="M10 5.5V14.5M5.5 10H14.5" stroke="#8f94a0" stroke-width="2"/></svg>
<div class="a" style="left:381px;top:897.50px;font-size:18px;line-height:56.5px;letter-spacing:0.38px;color:#0862cc">lay in bed for hours can't sleep<svg width="15" height="12" viewBox="0 0 15 12" style="margin-left:5.5px;vertical-align:middle;position:relative;top:-0.6px"><path d="M1.5 1.2L6.2 6.2L1.5 11.2M8.9 1.2L13.6 6.2L8.9 11.2" fill="none" stroke="#8f94a0" stroke-width="2" stroke-linecap="round" stroke-linejoin="round"/></svg><span style="display:inline-block;vertical-align:middle;margin-left:12.5px;background:#cfe9fb;border-radius:13px;height:25px;line-height:25px;padding:0 11.5px 0 11.5px;font-size:15px;font-weight:700;letter-spacing:1px;color:#0a66c9"><span style="margin-right:1.5px">#</span>8</span></div>
<div class="b" style="left:745.20px;top:915.85px;width:19.60px;height:19.60px;background:#c5e3f9;border-radius:4px"></div>
<div class="a " style="left:755.10px;top:917.65px;font-size:15px;color:#0a5fc4;font-weight:700;transform:translateX(-50%)">I</div>
<div class="a " style="right:660.40px;top:916.81px;font-size:18px;letter-spacing:-0.4px">8,100</div>
<div class="a " style="right:585.00px;top:916.81px;font-size:18px;">0</div>
<div class="b" style="left:1025.40px;top:917.95px;width:15.60px;height:15.60px;background:#0b9a77;border-radius:50%"></div>
<div class="a " style="right:485.20px;top:916.81px;font-size:18px;">76</div>
<div class="b" style="left:1125.80px;top:917.95px;width:15.50px;height:15.60px;background:#f2453f;border-radius:50%"></div>
<div class="a " style="right:353.50px;top:916.81px;font-size:18px;">1.27</div>
<div class="a " style="right:282.00px;top:916.81px;font-size:18px;">0.15</div>
<svg class="s" style="left:1339.00px;top:917.75px;" width="19" height="17" viewBox="0 0 19 17"><g fill="none" stroke="#a3a7b1" stroke-width="2.2" stroke-linejoin="miter"><path d="M7.9 15.5H2V3H17V5.9"/><circle cx="13" cy="11.1" r="2.9"/><path d="M15.2 13.4L17.2 15.5" stroke-linecap="round"/></g><rect x="0.9" y="1" width="17.2" height="3" fill="#a3a7b1"/></svg>
<div class="b" style="left:1369.00px;top:913.75px;width:1.30px;height:24.50px;background:#d0d3d9"></div>
<div class="a " style="left:1381.00px;top:916.81px;font-size:18px;color:#5f6470">5</div>
<div class="b" style="left:1381.20px;top:939.45px;width:10.00px;height:1.40px;background:repeating-linear-gradient(90deg,#5f6470 0 2.2px,transparent 2.2px 3.9px)"></div>
<div class="a " style="left:1445.40px;top:916.81px;font-size:18px;letter-spacing:0.1px">This week</div>
<svg class="s" style="left:1534.00px;top:917.15px;" width="18" height="18" viewBox="0 0 18 18"><g fill="none" stroke="#0a6dd1" stroke-width="2.2" stroke-linecap="round" stroke-linejoin="round"><path d="M14.34 13.98 A7.3 7.3 0 1 1 13.49 3.25"/><path d="M16.7 1.4 V7.3 H11.1"/></g></svg>
<div class="b" style="left:291.50px;top:1009.50px;width:1286.50px;height:1.00px;background:#e6e8ed"></div>
<div class="b" style="left:316.00px;top:969.75px;width:20.00px;height:19.90px;background:#fff;border:1px solid #c4c7cf;border-radius:4px"></div>
<svg class="s" style="left:356.30px;top:972.25px;" width="20" height="20" viewBox="0 0 20 20"><circle cx="10" cy="10" r="8.8" fill="none" stroke="#8f94a0" stroke-width="2"/><path d="M10 5.5V14.5M5.5 10H14.5" stroke="#8f94a0" stroke-width="2"/></svg>
<div class="a" style="left:381px;top:954.00px;font-size:18px;line-height:56.5px;letter-spacing:0.38px;color:#0862cc">how to fix sleep schedule<svg width="15" height="12" viewBox="0 0 15 12" style="margin-left:5.5px;vertical-align:middle;position:relative;top:-0.6px"><path d="M1.5 1.2L6.2 6.2L1.5 11.2M8.9 1.2L13.6 6.2L8.9 11.2" fill="none" stroke="#8f94a0" stroke-width="2" stroke-linecap="round" stroke-linejoin="round"/></svg><span style="display:inline-block;vertical-align:middle;margin-left:12.5px;background:#cfe9fb;border-radius:13px;height:25px;line-height:25px;padding:0 11.5px 0 11.5px;font-size:15px;font-weight:700;letter-spacing:1px;color:#0a66c9"><span style="margin-right:1.5px">#</span>6</span></div>
<div class="b" style="left:745.20px;top:972.35px;width:19.60px;height:19.60px;background:#c5e3f9;border-radius:4px"></div>
<div class="a " style="left:755.10px;top:974.15px;font-size:15px;color:#0a5fc4;font-weight:700;transform:translateX(-50%)">I</div>
<div class="a " style="right:660.40px;top:973.31px;font-size:18px;letter-spacing:-0.4px">6,600</div>
<div class="a " style="right:585.00px;top:973.31px;font-size:18px;">0</div>
<div class="b" style="left:1025.40px;top:974.45px;width:15.60px;height:15.60px;background:#0b9a77;border-radius:50%"></div>
<div class="a " style="right:485.20px;top:973.31px;font-size:18px;">72</div>
<div class="b" style="left:1125.80px;top:974.45px;width:15.50px;height:15.60px;background:#f2453f;border-radius:50%"></div>
<div class="a " style="right:353.50px;top:973.31px;font-size:18px;">0.45</div>
<div class="a " style="right:282.00px;top:973.31px;font-size:18px;">0.11</div>
<svg class="s" style="left:1339.00px;top:974.25px;" width="19" height="17" viewBox="0 0 19 17"><g fill="none" stroke="#a3a7b1" stroke-width="2.2" stroke-linejoin="miter"><path d="M7.9 15.5H2V3H17V5.9"/><circle cx="13" cy="11.1" r="2.9"/><path d="M15.2 13.4L17.2 15.5" stroke-linecap="round"/></g><rect x="0.9" y="1" width="17.2" height="3" fill="#a3a7b1"/></svg>
<div class="b" style="left:1369.00px;top:970.25px;width:1.30px;height:24.50px;background:#d0d3d9"></div>
<div class="a " style="left:1381.00px;top:973.31px;font-size:18px;color:#5f6470">5</div>
<div class="b" style="left:1381.20px;top:995.95px;width:10.00px;height:1.40px;background:repeating-linear-gradient(90deg,#5f6470 0 2.2px,transparent 2.2px 3.9px)"></div>
<div class="a " style="left:1445.40px;top:973.31px;font-size:18px;letter-spacing:0.1px">This week</div>
<svg class="s" style="left:1534.00px;top:973.65px;" width="18" height="18" viewBox="0 0 18 18"><g fill="none" stroke="#0a6dd1" stroke-width="2.2" stroke-linecap="round" stroke-linejoin="round"><path d="M14.34 13.98 A7.3 7.3 0 1 1 13.49 3.25"/><path d="M16.7 1.4 V7.3 H11.1"/></g></svg>
<div class="b" style="left:845.60px;top:332.10px;width:110.15px;height:697.90px;border:7.5px solid #b47bf5;border-bottom:none"></div>
<div class="b" style="left:957.25px;top:332.10px;width:96.55px;height:697.90px;border:7.5px solid #b47bf5;border-bottom:none"></div>
<svg class="s" style="left:922.00px;top:357.00px;" width="17" height="13" viewBox="0 0 17 13"><g stroke="#434855" stroke-width="2.3" stroke-linecap="round"><path d="M2.3 1.5H15M2.3 6.6H10.8M2.3 11.5H5.8"/></g></svg>
<svg class="s" style="left:970.00px;top:354.70px;" width="18" height="18" viewBox="0 0 18 18"><path d="M6.2 5.2 C7.564 10.036 7.564 10.036 12.4 11.4 C7.564 12.764000000000001 7.564 12.764000000000001 6.2 17.6 C4.836 12.764000000000001 4.836 12.764000000000001 0.0 11.4 C4.836 10.036 4.836 10.036 6.2 5.2Z M13.7 0.19999999999999973 C14.491999999999999 3.008 14.491999999999999 3.008 17.3 3.8 C14.491999999999999 4.592 14.491999999999999 4.592 13.7 7.4 C12.908 4.592 12.908 4.592 10.1 3.8 C12.908 3.008 12.908 3.008 13.7 0.19999999999999973Z" fill="#6d30e0"/></svg>
<div class="b" style="left:0.00px;top:952.00px;width:1600.00px;height:56.00px;background:linear-gradient(to bottom, rgba(255,255,255,0) 0%, rgba(255,255,255,0.55) 50%, rgba(255,255,255,1) 100%)"></div>
</body></html>
